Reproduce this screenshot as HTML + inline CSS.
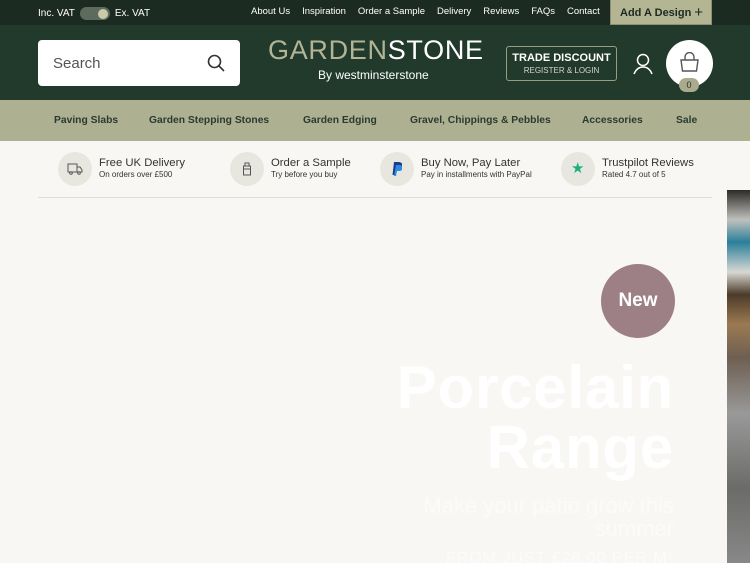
<!DOCTYPE html>
<html><head><meta charset="utf-8"><style>
*{margin:0;padding:0;box-sizing:border-box}
html,body{width:750px;height:563px;overflow:hidden}
body{background:#f8f7f3;font-family:"Liberation Sans",sans-serif;position:relative}
.top{position:absolute;top:0;left:0;width:750px;height:25px;background:#1c2b21;color:#fff;font-size:10px}
.top .vat{position:absolute;left:38px;top:7px;display:flex;align-items:center;gap:5px}
.tog{width:30px;height:13px;border-radius:7px;background:#5d6b5f;position:relative}
.tog:after{content:"";position:absolute;right:2px;top:1.5px;width:10px;height:10px;border-radius:50%;background:#c9cba8}
.links{position:absolute;top:6px;left:251px;display:flex;gap:12px;font-size:9.5px}
.add{position:absolute;left:610px;top:0;width:102px;height:25px;background:#b3b593;color:#1c2b21;font-size:11px;font-weight:bold;padding:7px 0 0 9px;border:1px solid #8d8f70;border-top:none}
.add span{position:absolute;right:8px;top:4px;font-size:15px;font-weight:normal}
.hdr{position:absolute;top:25px;left:0;width:750px;height:75px;background:#213a2c}
.search{position:absolute;left:38px;top:15px;width:202px;height:46px;background:#fff;border-radius:4px;color:#555;font-size:15px;padding:15px 0 0 15px}
.logo{position:absolute;left:268px;top:10px;font-size:27px;letter-spacing:0.7px;color:#b2b495}
.logo b{color:#fff;font-weight:normal}
.by{position:absolute;left:318px;top:43px;color:#fff;font-size:12px}
.trade{position:absolute;left:506px;top:21px;width:111px;height:35px;border:1px solid #9a9c80;border-radius:3px;color:#fff;text-align:center;font-size:11px;font-weight:bold;padding-top:5px}
.trade small{display:block;font-size:8px;font-weight:normal;color:#d5d6c5;margin-top:2px}
.cart{position:absolute;left:666px;top:15px;width:47px;height:47px;border-radius:50%;background:#fff}
.badge{position:absolute;left:679px;top:78px;width:20px;height:14px;border-radius:7px;background:#a9ab8c;color:#333;font-size:9px;text-align:center;line-height:14px}
.nav{position:absolute;top:100px;left:0;width:750px;height:41px;background:#adb091;font-size:10.3px;font-weight:bold;color:#2b3a30}
.nav span{position:absolute;top:15px}
.ben{position:absolute;top:152px;height:34px}
.ben .c{position:absolute;left:0;top:0;width:34px;height:34px;border-radius:50%;background:#e8e7df}
.ben .t{position:absolute;left:41px;top:5px;font-size:11.3px;color:#333;white-space:nowrap}
.ben .s{position:absolute;left:41px;top:18px;font-size:8px;color:#333;white-space:nowrap}
.line{position:absolute;left:38px;top:197px;width:674px;height:1px;background:#dddcd5}
.new{position:absolute;left:601px;top:264px;width:74px;height:74px;border-radius:50%;background:#9d7f86;color:#fff;font-size:19px;font-weight:bold;text-align:center;line-height:74px}
.h1{position:absolute;right:76px;top:358px;text-align:right;color:#fff;font-size:60px;letter-spacing:0.8px;font-weight:bold;line-height:60px}
.sub{position:absolute;right:76px;top:494px;text-align:right;color:#fff;font-size:22px;line-height:23px;opacity:.6}
.from{position:absolute;right:76px;top:550px;height:13px;overflow:hidden;text-align:right;color:#fff;font-size:16px;letter-spacing:1px;opacity:.6;white-space:nowrap}
.img{position:absolute;left:727px;top:190px;width:23px;height:373px;background:linear-gradient(180deg,#2e2a26 0%,#bfc0bd 8%,#2a7f9a 14%,#d8d8d3 22%,#4c3b2a 28%,#9b7a52 36%,#6e5f52 45%,#999 60%,#6b6b69 80%,#888 100%)}
</style></head><body>
<div class="top"><div class="vat">Inc. VAT <div class="tog"></div> Ex. VAT</div>
<div class="links"><span>About Us</span><span>Inspiration</span><span>Order a Sample</span><span>Delivery</span><span>Reviews</span><span>FAQs</span><span>Contact</span></div>
<div class="add">Add A Design<span>+</span></div></div>
<div class="hdr">
<div class="search">Search
<svg style="position:absolute;right:15px;top:14px" width="18" height="18" viewBox="0 0 18 18" fill="none" stroke="#333" stroke-width="1.6"><circle cx="7.5" cy="7.5" r="6"/><path d="M12 12l5 5"/></svg></div>
<div class="logo">GARDEN<b>STONE</b></div>
<div class="by">By westminsterstone</div>
<div class="trade">TRADE DISCOUNT<small>REGISTER &amp; LOGIN</small></div>
<svg style="position:absolute;left:633px;top:28px" width="20" height="22" viewBox="0 0 20 22" fill="none" stroke="#fff" stroke-width="1.5"><circle cx="10" cy="7" r="5.5"/><path d="M1 21c2-5 5-7 9-7s7 2 9 7"/></svg>
<div class="cart"><svg style="position:absolute;left:13px;top:12px" width="21" height="21" viewBox="0 0 21 21" fill="none" stroke="#555" stroke-width="1.4"><path d="M2 8h17l-1.5 11h-14z"/><path d="M6 8V5a4.5 4.5 0 0 1 9 0v3"/></svg></div>
</div>
<div class="badge">0</div>
<div class="nav"><span style="left:54px">Paving Slabs</span><span style="left:149px">Garden Stepping Stones</span><span style="left:303px">Garden Edging</span><span style="left:410px">Gravel, Chippings &amp; Pebbles</span><span style="left:582px">Accessories</span><span style="left:676px">Sale</span></div>
<div class="ben" style="left:58px"><div class="c"><svg style="position:absolute;left:9px;top:11px" width="16" height="12" viewBox="0 0 16 12" fill="none" stroke="#555" stroke-width="1"><path d="M1 1h9v8H1zM10 4h3l2 3v2h-5"/><circle cx="4" cy="10" r="1.3"/><circle cx="12" cy="10" r="1.3"/></svg></div><div class="t">Free UK Delivery</div><div class="s">On orders over £500</div></div>
<div class="ben" style="left:230px"><div class="c"><svg style="position:absolute;left:12px;top:10px" width="10" height="14" viewBox="0 0 10 14" fill="none" stroke="#555" stroke-width="1"><path d="M3 1h4v3H3zM1.5 4h7v9h-7zM1.5 7h7"/></svg></div><div class="t">Order a Sample</div><div class="s">Try before you buy</div></div>
<div class="ben" style="left:380px"><div class="c"><svg style="position:absolute;left:12px;top:10px" width="10" height="14" viewBox="0 0 10 14"><path d="M2 0h5a3 3 0 0 1 0 7H4.5L3.5 13H0.5z" fill="#1f3c8a"/><path d="M4 3h4a3 3 0 0 1-1 6H5l-1 5H2z" fill="#2a8be0"/></svg></div><div class="t">Buy Now, Pay Later</div><div class="s">Pay in installments with PayPal</div></div>
<div class="ben" style="left:561px"><div class="c"><span style="position:absolute;left:10px;top:7px;color:#1fb07a;font-size:15px">★</span></div><div class="t">Trustpilot Reviews</div><div class="s">Rated 4.7 out of 5</div></div>
<div class="line"></div>
<div class="new">New</div>
<div class="h1">Porcelain<br>Range</div>
<div class="sub">Make your patio grow this<br>summer</div>
<div class="from">FROM JUST £28.00 PER M²</div>
<div class="img"></div>
</body></html>
